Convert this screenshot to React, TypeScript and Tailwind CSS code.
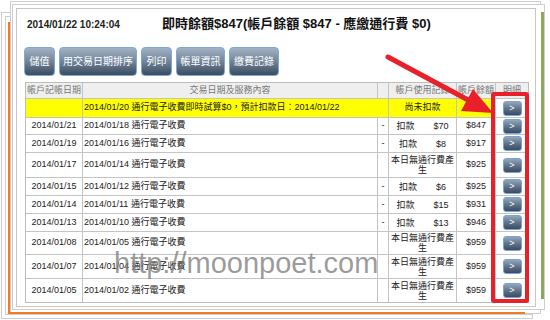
import React from "react";

type Row = {
  h: number;
  d: string;
  t: string;
  dash: boolean;
  use: [string, string] | null;
  bal: string;
  last?: boolean;
};

const rows: Row[] = [
  { h: 17, d: "2014/01/21", t: "2014/01/18 通行電子收費", dash: true, use: ["扣款", "$70"], bal: "$847" },
  { h: 18, d: "2014/01/19", t: "2014/01/16 通行電子收費", dash: true, use: ["扣款", "$8"], bal: "$917" },
  { h: 25, d: "2014/01/17", t: "2014/01/14 通行電子收費", dash: false, use: null, bal: "$925" },
  { h: 18, d: "2014/01/15", t: "2014/01/12 通行電子收費", dash: true, use: ["扣款", "$6"], bal: "$925" },
  { h: 18, d: "2014/01/14", t: "2014/01/11 通行電子收費", dash: true, use: ["扣款", "$15"], bal: "$931" },
  { h: 18, d: "2014/01/13", t: "2014/01/10 通行電子收費", dash: true, use: ["扣款", "$13"], bal: "$946" },
  { h: 23, d: "2014/01/08", t: "2014/01/05 通行電子收費", dash: false, use: null, bal: "$959" },
  { h: 24, d: "2014/01/07", t: "2014/01/04 通行電子收費", dash: false, use: null, bal: "$959" },
  { h: 23, d: "2014/01/05", t: "2014/01/02 通行電子收費", dash: false, use: null, bal: "$959", last: true },
];

function SmallBtn() {
  return (
    <div className="w-[19px] h-[15px] rounded-[3px] border border-[#78a3d8] bg-[linear-gradient(to_bottom,#93a7bb_0%,#5b6f85_55%,#3a4c61_100%)] flex items-center justify-center text-white text-[9px] leading-none">
      &gt;
    </div>
  );
}

function BigBtn({ label, w }: { label: string; w: string }) {
  return (
    <div
      className={`${w} h-[29px] rounded-[4px] border border-[#7fa8da] bg-[linear-gradient(to_bottom,#a2b2c3_0%,#71849a_50%,#3b4c5f_100%)] flex items-center justify-center text-white text-[10px] leading-none`}
    >
      {label}
    </div>
  );
}

export default function App() {
  return (
    <div className="relative w-[550px] h-[320px] overflow-hidden bg-white font-['Liberation_Sans','Noto_Sans_CJK_TC',sans-serif] pt-[8px] pl-[16px]">
      {/* stacked back layers */}
      <div className="absolute left-[1px] top-[12px] w-[532px] h-[307px] border border-[#cdcdcd]" />
      <div className="absolute left-[5px] top-[16px] w-[528px] h-[299px] border border-[#cdcdcd]" />
      <div className="absolute left-[10px] top-[1px] w-[531px] h-[313px] border border-[#cdcdcd] bg-white" />
      <div className="absolute left-[12px] top-[4px] w-[533px] h-[306px] border border-[#cdcdcd] bg-white" />
      <div className="absolute left-[8px] top-[22px] w-[517px] h-[292px] border-l-[2px] border-b-[2px] border-[#f37a1f]" />
      <div className="absolute left-[541px] top-[12px] w-[3px] h-[287px] bg-[#8ea75e]" />

      {/* main frame */}
      <div className="relative z-10 w-[520px] h-[299px] border border-[#c6c6c6] bg-white flex flex-col">
        <div className="mt-[4px] h-[22px] flex items-center">
          <div className="w-[145px] pl-[10px] text-[10px] font-bold text-[#222]">2014/01/22 10:24:04</div>
          <div className="text-[13px] font-bold text-[#111]">即時餘額$847(帳戶餘額 $847 - 應繳通行費 $0)</div>
        </div>

        <div className="mt-[12px] pl-[7px] flex gap-[4px]">
          <BigBtn label="儲值" w="w-[31px]" />
          <BigBtn label="用交易日期排序" w="w-[78px]" />
          <BigBtn label="列印" w="w-[31px]" />
          <BigBtn label="帳單資訊" w="w-[49px]" />
          <BigBtn label="繳費記錄" w="w-[50px]" />
        </div>

        <div className="mt-[6px] ml-[8px] w-[504px] border border-[#bdbdbd] text-[9px] text-[#222]">
          {/* header */}
          <div className="h-[16px] flex border-b border-[#c4c4c4] bg-[#efefef] text-[#777]">
            <div className="w-[57px] border-r border-[#c4c4c4] flex items-center justify-center">帳戶記帳日期</div>
            <div className="w-[295px] border-r border-[#c4c4c4] flex items-center justify-center">交易日期及服務內容</div>
            <div className="w-[11px] border-r border-[#c4c4c4]" />
            <div className="w-[68px] border-r border-[#c4c4c4] flex items-center justify-center">帳戶使用記錄</div>
            <div className="w-[39px] border-r border-[#c4c4c4] flex items-center justify-center">帳戶餘額</div>
            <div className="w-[32px] flex items-center justify-center">明細</div>
          </div>
          {/* yellow row */}
          <div className="h-[19px] flex border-b border-[#c4c4c4]">
            <div className="w-[57px] border-r border-[#c4c4c4] bg-[#ffff00]" />
            <div className="w-[306px] border-r border-[#c4c4c4] bg-[#ffff00] flex items-center pl-[1px] whitespace-nowrap">
              2014/01/20 通行電子收費即時試算$0，預計扣款日：2014/01/22
            </div>
            <div className="w-[68px] border-r border-[#c4c4c4] bg-[#ffff00] flex items-center justify-center">尚未扣款</div>
            <div className="w-[39px] border-r border-[#c4c4c4] bg-[#ffff00]" />
            <div className="w-[32px] flex items-center justify-center">
              <SmallBtn />
            </div>
          </div>
          {rows.map((r) => (
            <div
              key={r.d}
              className={`flex ${r.last ? "" : "border-b border-[#c4c4c4]"}`}
              style={{ height: r.h }}
            >
              <div className="w-[57px] border-r border-[#c4c4c4] flex items-center justify-center">{r.d}</div>
              <div className="w-[295px] border-r border-[#c4c4c4] flex items-center pl-[1px]">{r.t}</div>
              <div className="w-[11px] border-r border-[#c4c4c4] flex items-center justify-center">{r.dash ? "-" : ""}</div>
              <div className="w-[68px] border-r border-[#c4c4c4] flex items-center justify-center text-center leading-[10px] px-[2px]">
                {r.use ? (
                  <div className="flex gap-[19px]">
                    <span>{r.use[0]}</span>
                    <span>{r.use[1]}</span>
                  </div>
                ) : (
                  <span>本日無通行費產生</span>
                )}
              </div>
              <div className="w-[39px] border-r border-[#c4c4c4] flex items-center justify-center">{r.bal}</div>
              <div className="w-[32px] flex items-center justify-center">
                <SmallBtn />
              </div>
            </div>
          ))}
        </div>
      </div>

      {/* watermark */}
      <div className="absolute z-20 left-[114px] top-[249px] text-[29px] leading-[29px] text-[#7a7a7a]/75 whitespace-nowrap font-['Liberation_Sans',sans-serif]">
        http://moonpoet.com
      </div>

      {/* red highlight box */}
      <div className="absolute z-30 left-[491px] top-[92px] w-[38px] h-[211px] border-[4px] border-[#e8202a] rounded-[3px]" />

      {/* red arrow */}
      <svg className="absolute z-30 left-0 top-0" width="550" height="320" viewBox="0 0 550 320">
        <line x1="388" y1="57" x2="470" y2="101" stroke="#e8202a" strokeWidth="5" strokeLinecap="round" />
        <polygon points="493,113 461,111 473,89" fill="#e8202a" />
      </svg>
    </div>
  );
}
